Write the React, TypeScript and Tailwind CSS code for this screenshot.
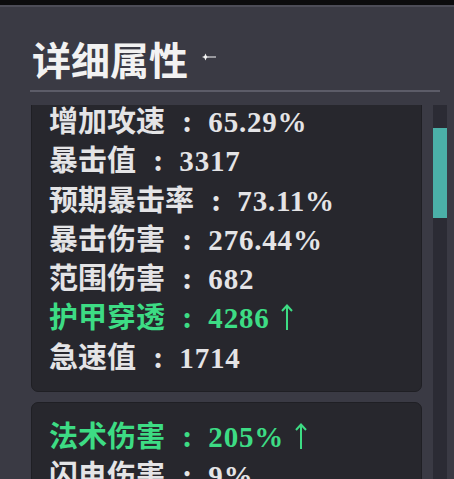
import React from 'react';

type Stat = { label: string; value: string; up?: boolean };

const mainStats: Stat[] = [
  { label: '增加攻速', value: '65.29%' },
  { label: '暴击值', value: '3317' },
  { label: '预期暴击率', value: '73.11%' },
  { label: '暴击伤害', value: '276.44%' },
  { label: '范围伤害', value: '682' },
  { label: '护甲穿透', value: '4286', up: true },
  { label: '急速值', value: '1714' },
];

const spellStats: Stat[] = [
  { label: '法术伤害', value: '205%', up: true },
  { label: '闪电伤害', value: '9%' },
];

function UpArrow() {
  return (
    <svg width="12" height="27" viewBox="0 0 12 27" className="inline-block ml-[11px] align-[-3px]" fill="none">
      <path d="M6 26V2" stroke="currentColor" strokeWidth="2" />
      <path d="M1 7L6 1.5L11 7" stroke="currentColor" strokeWidth="2" />
    </svg>
  );
}

function StatRow({ stat }: { stat: Stat }) {
  return (
    <div className={`h-[39.3px] leading-[39.3px] whitespace-nowrap ${stat.up ? 'text-[#3ddc84]' : 'text-[#e4e4e6]'}`}>
      {stat.label}
      <span className="ml-[17px] mr-[16px] text-[31px]">:</span>
      <span className="tracking-[0.8px]">{stat.value}</span>
      {stat.up && <UpArrow />}
    </div>
  );
}

function StatCard({ stats }: { stats: Stat[] }) {
  return (
    <div className="rounded-[7px] bg-[#27272d] border border-[#1f1f24] px-[17px] py-[14px]">
      {stats.map((s) => (
        <StatRow key={s.label} stat={s} />
      ))}
    </div>
  );
}

export default function App() {
  return (
    <div
      className="w-[454px] h-[479px] overflow-hidden flex flex-col bg-[#3a3a44] font-bold text-[29px]"
      style={{ fontFamily: '"Liberation Serif", "Noto Sans CJK SC", serif' }}
    >
      <div className="h-[5px] bg-[#0b0b0d] shrink-0" />
      <div className="h-[2px] bg-[#4c4c57] shrink-0" />
      <div className="flex items-center pl-[32px] pt-[32px] pb-[12px] shrink-0">
        <h1 className="text-[39px] leading-[39px] text-[#f2f2f2]" style={{ fontFamily: '"Noto Sans CJK SC", sans-serif' }}>
          详细属性
        </h1>
        <svg width="14" height="8" viewBox="0 0 14 8" className="ml-[14px] mt-[-4px]">
          <path d="M3.5 0.5L4.6 3L7 4L4.6 5L3.5 7.5L2.4 5L0 4L2.4 3Z" fill="#f2f2f2" />
          <path d="M6 4H14" stroke="#d8d8dc" strokeWidth="1.2" />
        </svg>
      </div>
      <div className="ml-[30px] mr-[14px] h-[2px] bg-[#5c5c68] shrink-0" />
      <div className="flex-1 min-h-0 flex pt-[13px] pl-[31px] overflow-hidden">
        <div className="w-[391px] shrink-0 overflow-hidden">
          <div className="-mt-[18px] flex flex-col gap-[10px]">
            <StatCard stats={mainStats} />
            <StatCard stats={spellStats} />
          </div>
        </div>
        <div className="ml-[11px] w-[14px] bg-[#2b2b34] pt-[23px] shrink-0">
          <div className="h-[90px] bg-[#4bb0a8]" />
        </div>
      </div>
    </div>
  );
}
